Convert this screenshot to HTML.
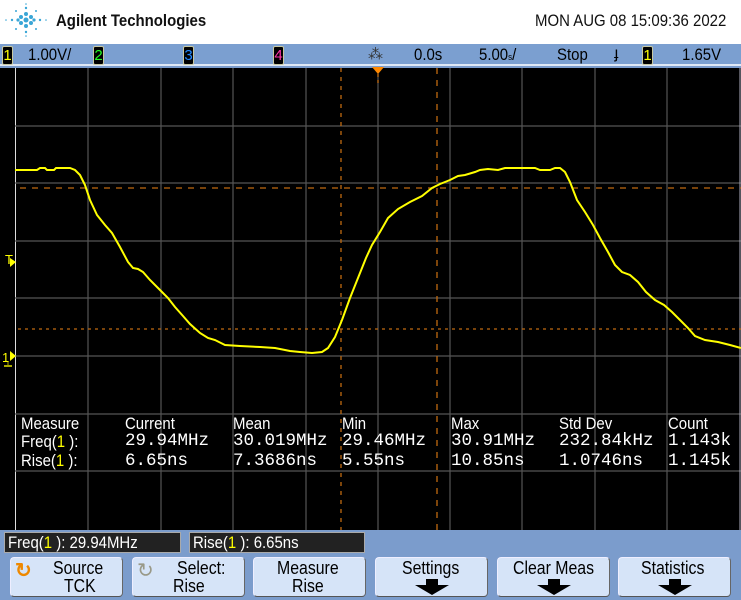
<!DOCTYPE html><html><head><style>
*{margin:0;padding:0;box-sizing:border-box}
body{width:741px;height:600px;overflow:hidden;background:#7b9ccc;font-family:"Liberation Sans",sans-serif;position:relative}
.top{position:absolute;left:0;top:0;width:741px;height:44px;background:#fff}
.bar{position:absolute;left:0;top:44px;width:741px;height:22px;background:#7b9fd0;border-bottom:2px solid #dfe8f5}
.t{position:absolute;white-space:nowrap}
.n{transform:scaleX(0.88);transform-origin:0 0}
.ch{position:absolute;top:46px;height:19px;width:11px;background:#000;border:1px solid #c8c8a0;border-radius:2px;font-size:15px;line-height:17px;text-align:center}
.scr{position:absolute;left:0;top:68px;width:741px;height:462px;background:#000}
.mono{font-family:"Liberation Mono",monospace;font-size:17.5px;color:#fff}
.lab{font-size:15px;color:#fff}
.fld{position:absolute;top:532px;height:21px;background:#222;border:1px solid #aaa;color:#fff;font-size:15px;line-height:19px;padding-left:4px}
.btn{position:absolute;top:557px;width:113px;height:40px;background:#d6e4f8;border:1px solid #eef;border-right-color:#666;border-bottom-color:#555;border-radius:4px;text-align:center;font-size:16px;line-height:18px;color:#000;padding-top:2px}
.arr{position:absolute;left:39px;top:21px}
.y{color:#ff0}
</style></head><body>
<div class="top">
<svg class="t" style="left:4px;top:2px" width="44" height="36" viewBox="0 0 44 36">
<g fill="#3aa6d6">
<circle cx="22" cy="18" r="2.5"/><circle cx="17" cy="15" r="2"/><circle cx="27" cy="15" r="2"/><circle cx="17" cy="21" r="2"/><circle cx="27" cy="21" r="2"/><circle cx="22" cy="12" r="2"/><circle cx="22" cy="24" r="2"/><circle cx="14" cy="18" r="1.6"/><circle cx="30" cy="18" r="1.6"/>
<circle cx="22" cy="6" r="1.2"/><circle cx="22" cy="30" r="1.2"/><circle cx="8" cy="18" r="1.2"/><circle cx="36" cy="18" r="1.2"/><circle cx="12" cy="9" r="1"/><circle cx="32" cy="9" r="1"/><circle cx="12" cy="27" r="1"/><circle cx="32" cy="27" r="1"/><circle cx="22" cy="2" r=".8"/><circle cx="22" cy="34" r=".8"/><circle cx="2" cy="18" r=".8"/><circle cx="42" cy="18" r=".8"/>
</g></svg>
<div class="t n" style="left:56px;top:11px;font-size:17px;font-weight:bold;color:#111">Agilent Technologies</div>
<div class="t n" style="left:535px;top:11px;font-size:17px;color:#111">MON AUG 08 15:09:36 2022</div>
</div>
<div class="bar"></div>
<div class="ch" style="left:2px;color:#ff0">1</div>
<div class="t n" style="left:28px;top:45px;font-size:17px">1.00V/</div>
<div class="ch" style="left:93px;color:#2f2">2</div>
<div class="ch" style="left:183px;color:#28f">3</div>
<div class="ch" style="left:273px;color:#f3a">4</div>
<div class="t" style="left:368px;top:45px;font-size:15px;color:#333">⁂</div>
<div class="t n" style="left:414px;top:45px;font-size:17px">0.0s</div>
<div class="t n" style="left:479px;top:45px;font-size:17px">5.00<span style="font-size:9px">s</span>/</div>
<div class="t n" style="left:557px;top:45px;font-size:17px">Stop</div>
<div class="t" style="left:614px;top:45px;font-size:16px">ɟ</div>
<div class="ch" style="left:642px;color:#ff0">1</div>
<div class="t n" style="left:682px;top:45px;font-size:17px">1.65V</div>
<div class="scr"></div>
<svg class="t" style="left:0;top:0" width="741" height="600">
<line x1="15.5" y1="68" x2="15.5" y2="530" stroke="#ddd" stroke-width="1"/>
<g stroke="#555" stroke-width="1.2">
<line x1="88" y1="68" x2="88" y2="530"/><line x1="161" y1="68" x2="161" y2="530"/><line x1="233" y1="68" x2="233" y2="530"/><line x1="306" y1="68" x2="306" y2="530"/><line x1="378" y1="68" x2="378" y2="530"/><line x1="450" y1="68" x2="450" y2="530"/><line x1="522" y1="68" x2="522" y2="530"/><line x1="595" y1="68" x2="595" y2="530"/><line x1="667" y1="68" x2="667" y2="530"/>
<line x1="15" y1="126" x2="741" y2="126"/><line x1="15" y1="183" x2="741" y2="183"/><line x1="15" y1="241" x2="741" y2="241"/><line x1="15" y1="298" x2="741" y2="298"/><line x1="15" y1="356" x2="741" y2="356"/><line x1="15" y1="414" x2="741" y2="414"/><line x1="15" y1="471" x2="741" y2="471"/>
</g>
<line x1="740" y1="68" x2="740" y2="530" stroke="#aab" stroke-width="1"/>
<g stroke="#c06a10" stroke-width="1.3" stroke-dasharray="6,6">
<line x1="20" y1="188" x2="741" y2="188"/>
<line x1="341" y1="68" x2="341" y2="530" stroke-dasharray="4,5"/><line x1="437" y1="68" x2="437" y2="530"/>
</g>
<line x1="18" y1="329" x2="741" y2="329" stroke="#c06a10" stroke-width="1.2" stroke-dasharray="3,4"/>
<line x1="378" y1="68" x2="378" y2="86" stroke="#c06a10" stroke-width="1.3" stroke-dasharray="3,3"/>
<polygon points="372,67 384,67 378,74" fill="#f80"/>
<polyline fill="none" stroke="#ff0" stroke-width="2" points="15,170 37,170 40,168 45,168 47,170 54,170 56,168 70,168 75,170 80,175 85,185 90,200 97,215 105,225 112,233 120,247 128,262 133,268 138,269 143,272 150,280 160,290 168,298 175,307 183,316 190,324 200,333 208,338 215,340 225,345 240,346 260,347 275,348 290,351 300,352 312,353 322,352 328,348 335,337 342,320 350,298 358,278 366,258 372,245 380,232 388,218 398,209 410,202 422,196 432,188 440,184 450,180 458,176 465,175 475,172 480,170 488,169 498,170 505,168 535,168 540,170 550,170 555,168 560,168 565,172 570,182 577,200 585,212 593,225 600,238 608,252 615,265 622,272 630,275 638,282 646,292 655,300 664,305 672,312 680,320 688,328 695,336 705,340 718,342 730,345 741,348"/>
<g fill="#ff0"><text x="5" y="264" font-size="13" font-family="Liberation Sans">T</text><polygon points="10,258 16,262 10,267"/>
<text x="2" y="362" font-size="13" font-family="Liberation Sans">1</text><polygon points="10,351 16,356 10,361"/></g>
<line x1="8" y1="362" x2="8" y2="366" stroke="#aa0"/><line x1="4" y1="366" x2="12" y2="366" stroke="#aa0" stroke-width="2"/>
</svg>
<div class="t lab n" style="left:21px;top:414px;font-size:17px">Measure</div>
<div class="t lab n" style="left:21px;top:432px;font-size:17px">Freq(<span class="y">1</span> ):</div>
<div class="t lab n" style="left:21px;top:451px;font-size:17px">Rise(<span class="y">1</span> ):</div>
<div class="t lab n" style="left:125px;top:414px;font-size:17px">Current</div>
<div class="t lab n" style="left:233px;top:414px;font-size:17px">Mean</div>
<div class="t lab n" style="left:342px;top:414px;font-size:17px">Min</div>
<div class="t lab n" style="left:451px;top:414px;font-size:17px">Max</div>
<div class="t lab n" style="left:559px;top:414px;font-size:17px">Std Dev</div>
<div class="t lab n" style="left:668px;top:414px;font-size:17px">Count</div>
<div class="t mono" style="left:125px;top:431px">29.94MHz</div><div class="t mono" style="left:125px;top:451px">6.65ns</div>
<div class="t mono" style="left:233px;top:431px">30.019MHz</div><div class="t mono" style="left:233px;top:451px">7.3686ns</div>
<div class="t mono" style="left:342px;top:431px">29.46MHz</div><div class="t mono" style="left:342px;top:451px">5.55ns</div>
<div class="t mono" style="left:451px;top:431px">30.91MHz</div><div class="t mono" style="left:451px;top:451px">10.85ns</div>
<div class="t mono" style="left:559px;top:431px">232.84kHz</div><div class="t mono" style="left:559px;top:451px">1.0746ns</div>
<div class="t mono" style="left:668px;top:431px">1.143k</div><div class="t mono" style="left:668px;top:451px">1.145k</div>
<div class="fld" style="left:4px;width:177px"><span class="t n" style="left:3px;top:0;font-size:17px">Freq(<span class="y">1</span> ): 29.94MHz</span></div>
<div class="fld" style="left:189px;width:176px"><span class="t n" style="left:3px;top:0;font-size:17px">Rise(<span class="y">1</span> ): 6.65ns</span></div>
<div class="btn" style="left:10px"><span style="position:absolute;left:4px;top:4px;color:#e80;font-size:20px;font-weight:bold">↻</span><span class="t n" style="left:42px;top:1px;font-size:18px">Source</span><span class="t n" style="left:53px;top:19px;font-size:18px">TCK</span></div>
<div class="btn" style="left:132px"><span style="position:absolute;left:4px;top:4px;color:#998;font-size:20px">↻</span><span class="t n" style="left:44px;top:1px;font-size:18px">Select:</span><span class="t n" style="left:40px;top:19px;font-size:18px">Rise</span></div>
<div class="btn" style="left:253px"><span class="t n" style="left:23px;top:1px;font-size:18px">Measure</span><span class="t n" style="left:38px;top:19px;font-size:18px">Rise</span></div>
<div class="btn" style="left:375px"><span class="t n" style="left:26px;top:1px;font-size:18px">Settings</span><svg class="arr" width="34" height="16"><polygon points="11,0 23,0 23,6 34,6 17,16 0,6 11,6" fill="#000"/></svg></div>
<div class="btn" style="left:497px"><span class="t n" style="left:15px;top:1px;font-size:18px">Clear Meas</span><svg class="arr" width="34" height="16"><polygon points="11,0 23,0 23,6 34,6 17,16 0,6 11,6" fill="#000"/></svg></div>
<div class="btn" style="left:618px"><span class="t n" style="left:22px;top:1px;font-size:18px">Statistics</span><svg class="arr" width="34" height="16"><polygon points="11,0 23,0 23,6 34,6 17,16 0,6 11,6" fill="#000"/></svg></div>
</body></html>
